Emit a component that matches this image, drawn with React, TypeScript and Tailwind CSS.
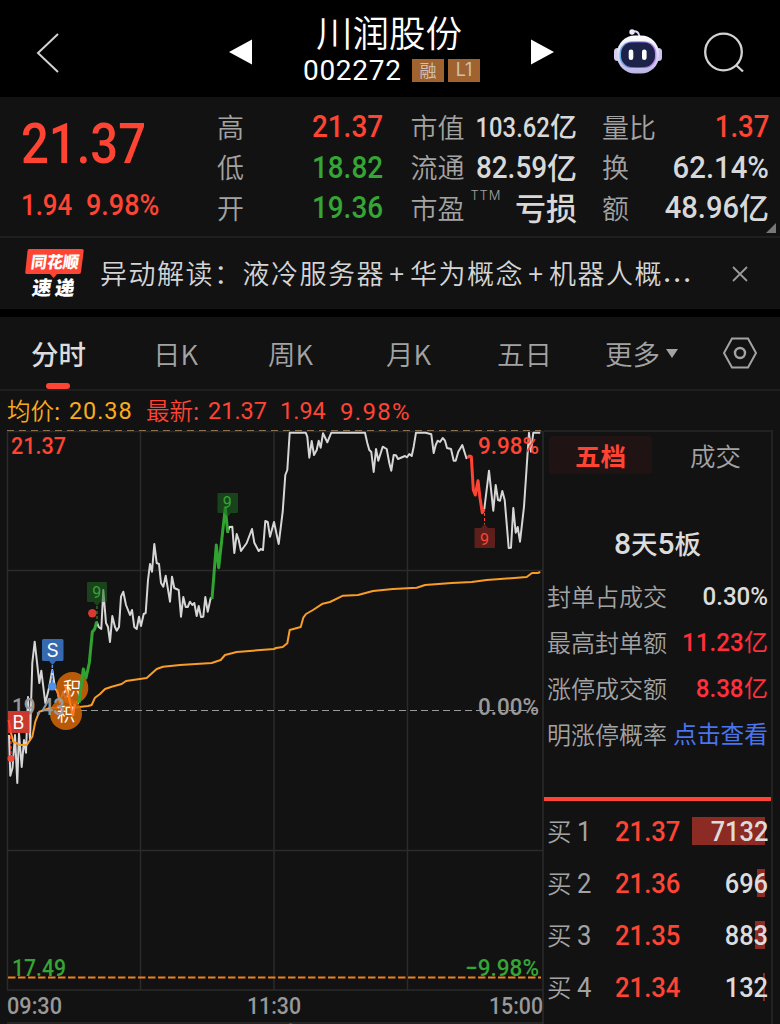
import { ReactNode } from 'react';
import clsx from 'clsx';

type Point = [number, number];

const priceLine: Point[] = [
  [9, 735], [10.3, 775.7], [12.5, 768], [15, 735], [17.3, 783], [19, 733], [21.7, 767], [24, 740], [26, 752.7], [28, 697],
  [30, 740], [32.3, 663], [34.7, 641.7], [39.3, 683], [41.3, 670.7], [45.3, 703], [49, 688], [52.3, 670],
  [55, 688], [57.5, 692], [60, 703], [63, 692], [66, 700], [69, 690], [72, 716], [75, 702], [79, 703],
];

const priceLine2: Point[] = [
  [96.7, 621.7], [98.7, 627], [101.3, 629], [103.3, 590], [106, 623], [108, 627], [110, 642], [112.3, 616],
  [115, 627], [116.7, 630.7], [119, 627], [121, 596.7], [123.3, 591.7], [126, 605], [130, 615], [132, 610],
  [134.3, 627], [136.7, 629], [139, 616.7], [141, 626], [143.7, 614], [145.7, 613], [148, 580], [150, 564],
  [152, 571.7], [154.3, 544], [156.7, 563], [159, 564], [161, 583], [163.3, 586.7], [165.7, 575.7], [170, 601.7],
  [172, 576.7], [174.3, 588], [178.7, 590], [181, 616.7], [183.3, 597], [185.7, 607], [187.7, 607], [190, 601.7],
  [192.3, 605], [194.3, 603], [196.7, 616], [198.7, 606], [201, 617], [203.3, 616.7], [205.3, 597], [207.7, 611.7],
  [210.7, 598], [212, 599],
];

const priceLine3: Point[] = [
  [227.7, 532.7], [229.3, 527], [232.3, 526.7], [234.3, 553], [236.7, 534], [238.7, 540], [241, 551], [246.7, 543],
  [252, 529], [254.3, 542.7], [258.7, 551], [260.7, 549], [263, 550], [265.3, 521], [267.7, 522], [270, 536.7],
  [274, 522], [278.7, 544], [282.7, 511.7], [285.3, 475], [287.3, 470], [289.7, 432.7], [305.7, 432.7],
  [307.3, 436.7], [309.3, 457.7], [311.7, 441], [314, 455], [316.7, 450], [318.7, 440.7], [320.7, 447.7],
  [323, 433.3], [327.3, 442.3], [331.3, 432.7], [365, 432.7], [367.3, 443], [369.3, 450], [371.3, 452],
  [373.7, 472], [376, 449], [378.3, 460.7], [382.7, 446.7], [386.7, 449], [389.3, 463], [391.3, 470.7],
  [393.7, 455], [396, 455.3], [398, 459], [405, 456], [407, 457.3], [409.3, 454], [411.7, 456], [413.7, 446.7],
  [416, 432.7], [425.7, 432.7], [431.3, 434.3], [433.7, 453], [435.7, 445], [437.7, 440.7], [440, 442],
  [442.7, 438], [445, 440.7], [447, 448], [451, 449], [453.7, 460.7], [455.7, 460.7], [458.3, 451.7],
  [462.3, 445], [466.7, 459],
];

const priceLine4: Point[] = [
  [484.3, 509], [489, 470.7], [493.3, 510.7], [495.7, 485], [498, 500], [500, 500.7], [502.3, 491], [504.7, 500],
  [508.7, 548], [511, 547.7], [513.3, 508], [515.7, 532.7], [517.7, 527], [520, 541.7], [524, 506.7],
  [526.7, 466.7], [529, 432.7], [531, 451.7], [533.3, 432.7], [540.3, 432.7],
];

const greenLine: Point[] = [[79, 703], [83.3, 669], [86, 678], [89.3, 663], [92.3, 632], [94.7, 629], [96.7, 621.7]];
const greenLine2: Point[] = [[212, 599], [216.3, 545], [218.7, 567.7], [225.3, 507.7], [227.7, 532.7]];
const redLine: Point[] = [
  [467.7, 457.7], [469.3, 456], [471.3, 456.7], [473.3, 490], [475.3, 495], [478, 480.7], [480, 498], [482.3, 512.7], [484.3, 509],
];

const avgLine: Point[] = [
  [8.7, 720], [11, 733], [13.3, 741.7], [20, 745], [26.7, 745], [32.3, 736.7], [35.3, 721.7], [39.3, 711.7],
  [50, 708], [79.3, 707], [88, 706], [91.7, 705], [95, 697.7], [100, 694], [105, 689], [111.7, 686.7],
  [121.7, 684], [126, 681], [146.7, 678], [156.7, 669], [163, 666.7], [180, 665], [211.7, 663], [220.7, 660],
  [225, 655], [236.7, 652], [274, 649], [276, 648], [282.7, 647], [287.3, 643.3], [289.7, 630], [300.7, 627],
  [303.3, 617.7], [306, 614], [313, 610], [322.7, 603.7], [330, 602], [343, 595.7], [358, 595], [373, 591],
  [393, 589], [416.7, 587.7], [425, 585], [451.7, 583], [471.7, 582], [486.7, 580], [526.7, 577], [532, 573],
  [537.7, 573], [540.3, 572],
];

const toPoints = (line: Point[]) => line.map((p) => p.join(',')).join(' ');

// Digits are set a little narrower than the font's own width
const Num = ({ children, className }: { children: ReactNode; className?: string }) => (
  <span className={clsx('inline-block font-[Roboto] font-medium whitespace-pre', className)}>{children}</span>
);

const Header = () => (
  <header className="relative flex h-[97px] items-center bg-black">
    <svg className="mt-[8px] ml-[34px] shrink-0" width="26" height="44" fill="none" stroke="#d2d2d2" strokeWidth="2">
      <path d="M24 4 L4 23 L24 42" transform="translate(0 -1)" />
    </svg>
    <svg className="mt-[6px] ml-[169px] shrink-0" width="24" height="26" fill="#fff">
      <path d="M0 13 L23 0.500 V25.500 Z" />
    </svg>
    <div className="ml-[50px] flex w-[178px] flex-col">
      <h1 className="mt-[1px] ml-[13px] h-[39px] text-[36.500px] leading-[40px] font-[350]">川润股份</h1>
      <div className="mt-[4px] flex w-full items-center">
        <span className="w-[109px] font-[Roboto] text-[28px] leading-8 tracking-[0.700px]">002272</span>
        <span className="flex h-[23px] w-8 items-center justify-center bg-[#a0622f] pb-[2px] text-[17px] leading-none text-[#cfc0b4]">融</span>
        <span className="ml-1 flex h-[23px] w-8 items-center justify-center bg-[#a0622f] pb-[1px] font-[Inter] text-[18px] leading-none text-[#cfc0b4]">L1</span>
      </div>
    </div>
    <svg className="mt-[6px] ml-[50px] shrink-0" width="24" height="26" fill="#fff">
      <path d="M23 13 L0 0.500 V25.500 Z" />
    </svg>
    <Robot />
    <svg className="mt-[9px] ml-[39px] shrink-0" width="44" height="44" fill="none" stroke="#d2d2d2" strokeWidth="2.300">
      <circle cx="21.500" cy="21" r="18.300" />
      <path d="M34 34 L41 40.500" />
    </svg>
  </header>
);

const Robot = () => (
  <svg className="mt-[5px] ml-[58px] shrink-0" width="50" height="46" viewBox="0 0 50 46">
    <defs>
      <linearGradient id="shell" x1="0" y1="0" x2="0" y2="1">
        <stop offset="0" stopColor="#ffffff" />
        <stop offset="1" stopColor="#b9b5e6" />
      </linearGradient>
      <linearGradient id="rim" x1="0" y1="0" x2="1" y2="0">
        <stop offset="0" stopColor="#6cb4e8" />
        <stop offset="0.500" stopColor="#6c50c8" />
        <stop offset="1" stopColor="#c58cf0" />
      </linearGradient>
    </defs>
    <path d="M19 3.500 Q26 2 26.500 9" fill="none" stroke="#dcd9f5" strokeWidth="2" />
    <circle cx="19" cy="4" r="2.700" fill="#e9e8fa" />
    <rect x="1" y="20" width="7" height="13" rx="3.500" fill="#d3d0ef" />
    <rect x="42" y="20" width="7" height="13" rx="3.500" fill="#c9c4f0" />
    <rect x="4" y="7.500" width="42" height="38" rx="18" fill="url(#shell)" />
    <rect x="6.500" y="13.500" width="37" height="26.500" rx="12" fill="url(#rim)" />
    <rect x="8" y="14.500" width="34" height="24.500" rx="11" fill="#1d2348" />
    <rect x="15.700" y="21.500" width="4.600" height="10.500" rx="2.300" fill="#fff" />
    <rect x="29" y="21.500" width="4.600" height="10.500" rx="2.300" fill="#fff" />
  </svg>
);

const QuoteRow = ({ label, sup, children }: { label: string; sup?: string; children: ReactNode }) => (
  <div className="flex h-[40.500px] items-center justify-between">
    <span className="relative pb-[2px] text-[27px] leading-none font-[350] text-[#a3a3a3]">
      {label}
      {sup && <sup className="absolute -top-[5px] left-[60px] font-[Inter] text-[13px] leading-none font-light tracking-[0.800px]">{sup}</sup>}
    </span>
    <span className="flex items-center">{children}</span>
  </div>
);

const Quote = () => (
  <section className="relative flex h-[141px] border-b-2 border-[#1f1f1f] pt-[10px]">
    <div className="w-[217px] shrink-0 pl-[21px] text-[#ff4433]">
      <div className="mt-[4px] h-[66px]">
        <Num className="origin-left scale-x-[0.875] text-[56px] leading-[66px]">21.37</Num>
      </div>
      <div className="mt-[12px] flex text-[29px] leading-[32px]">
        <Num className="w-[64.500px] origin-left scale-x-[0.89]">1.94</Num>
        <Num className="origin-left scale-x-[0.93]">9.98%</Num>
      </div>
    </div>
    <div className="w-[166px] shrink-0">
      <QuoteRow label="高"><Num className="origin-right scale-x-[0.9] text-[31px] text-[#ff4433]">21.37</Num></QuoteRow>
      <QuoteRow label="低"><Num className="origin-right scale-x-[0.9] text-[31px] text-[#35a535]">18.82</Num></QuoteRow>
      <QuoteRow label="开"><Num className="origin-right scale-x-[0.9] text-[31px] text-[#35a535]">19.36</Num></QuoteRow>
    </div>
    <div className="ml-[27.500px] w-[166.500px] shrink-0 font-medium text-[#d8d8d8]">
      <QuoteRow label="市值">
        <Num className="-ml-4 origin-right scale-x-[0.865] text-[27.500px]">103.62</Num>
        <span className="pb-[3px] text-[27px] leading-none">亿</span>
      </QuoteRow>
      <QuoteRow label="流通">
        <Num className="-ml-4 origin-right scale-x-[0.9] text-[31px]">82.59</Num>
        <span className="pb-[4px] text-[30px] leading-none">亿</span>
      </QuoteRow>
      <QuoteRow label="市盈" sup="TTM">
        <span className="pb-[4px] text-[31px] leading-none">亏损</span>
      </QuoteRow>
    </div>
    <div className="ml-[25px] w-[167px] shrink-0 font-medium text-[#d8d8d8]">
      <QuoteRow label="量比"><Num className="origin-right scale-x-[0.89] text-[31px] text-[#ff4433]">1.37</Num></QuoteRow>
      <QuoteRow label="换"><Num className="origin-right scale-x-[0.945] text-[31px]">62.14%</Num></QuoteRow>
      <QuoteRow label="额">
        <Num className="origin-right scale-x-[0.94] text-[31px]">48.96</Num>
        <span className="pb-[4px] text-[30px] leading-none">亿</span>
      </QuoteRow>
    </div>
    <svg className="absolute right-[4px] bottom-[3px]" width="10" height="10" fill="#777">
      <path d="M10 0 V10 H0 Z" />
    </svg>
  </section>
);

const News = () => (
  <section className="flex h-[71px] items-center">
    <div className="ml-[25px] flex w-[59px] flex-col items-center">
      <svg className="overflow-visible" width="60" height="52" viewBox="0 0 60 52">
        <path d="M4 1 H57 Q59 1 58.700 3 L56 24 Q55.800 26 54 26 H32 L28.500 30 L25 26 H2 Q0 26 0.300 24 L2.500 3 Q2.700 1 4 1 Z" fill="#ff4433" />
        <g fill="#fff" fontFamily="'Noto Sans CJK SC', sans-serif" fontWeight="900" transform="skewX(-8)">
          <text x="8" y="20" fontSize="16.500" textLength="48" lengthAdjust="spacingAndGlyphs">同花顺</text>
          <text x="13" y="47.500" fontSize="19.500" textLength="42.500">速递</text>
        </g>
      </svg>
    </div>
    <p className="ml-[16px] flex w-[620px] pb-[1px] text-[27px] leading-10 font-[350] tracking-[1.500px] whitespace-nowrap text-[#d5d5d5]">
      <span>异动解读：液冷服务器</span>
      <span className="w-[25px] text-center">+</span>
      <span>华为概念</span>
      <span className="w-[25px] text-center">+</span>
      <span>机器人概</span>
      <span className="font-[Inter] font-medium tracking-[1.800px]">...</span>
    </p>
    <svg className="ml-[12px]" width="16" height="16" stroke="#999" strokeWidth="1.800">
      <path d="M1 1 L15 15 M15 1 L1 15" />
    </svg>
  </section>
);

const tabs = [
  { name: '分时', width: 'w-[122px]' },
  { name: '日K', width: 'w-[115px]' },
  { name: '周K', width: 'w-[118px]' },
  { name: '月K', width: 'w-[111px]' },
  { name: '五日', width: 'w-[108px]' },
];

const Tabs = () => (
  <nav className="flex h-[74px] items-center border-b-2 border-[#1f1f1f] pl-[31px] text-[27.500px] font-[350] text-[#a3a3a3]">
    {tabs.map((tab, i) => (
      <div key={tab.name} className={clsx('relative leading-10', tab.width, i === 0 && 'font-medium text-[#dcdcdc]')}>
        {tab.name}
        {i === 0 && <span className="absolute top-[50px] left-[15px] h-[6px] w-6 rounded-full bg-[#ff4433]" />}
      </div>
    ))}
    <div className="flex w-[118px] items-center leading-10">
      更多
      <svg className="ml-[6px]" width="12" height="9" fill="#a3a3a3">
        <path d="M0 0 H12 L6 9 Z" />
      </svg>
    </div>
    <svg width="34" height="32" fill="none" stroke="#a3a3a3" strokeWidth="2">
      <path d="M9 1.500 H25 L33 16 L25 30.500 H9 L1 16 Z" />
      <circle cx="17" cy="16" r="5" strokeWidth="2.400" />
    </svg>
  </nav>
);

const Legend = () => (
  <div className="flex h-[39px] items-center pl-[7px] text-[23.500px] font-[350] text-[#ff4433]">
    <span className="w-[62px] text-[#f9ab1d]">均价:</span>
    <span className="mt-[2px] w-[77px] font-[Roboto] font-normal tracking-[0.900px] text-[#f9ab1d]">20.38</span>
    <span className="w-[62px]">最新:</span>
    <span className="mt-[2px] w-[72px] font-[Roboto] font-normal">21.37</span>
    <span className="mt-[2px] w-[60px] font-[Roboto] font-normal">1.94</span>
    <span className="mt-[2px] font-[Roboto] text-[24px] font-normal tracking-[1.300px]">9.98%</span>
  </div>
);

const Chart = () => (
  <svg className="shrink-0 overflow-visible" width="544" height="594" viewBox="0 430 544 594" fontFamily="Roboto, 'Noto Sans CJK SC', sans-serif" fontSize="24">
    <g stroke="#2b2b2b" strokeWidth="1.500">
      <path d="M7 431.500 H543 M7 570.500 H543 M7 850.500 H543 M7 990 H543 M7 1023 H543" />
      <path d="M7.500 431 V990 M140.500 431 V990 M274 431 V990 M407.500 431 V990 M543 431 V1024" />
    </g>
    <path d="M289 1023.500 H292" stroke="#8c2a24" />
    <path d="M7 430.500 H541" stroke="#8d7350" strokeDasharray="7 5" />
    <path d="M80 710.500 H541" stroke="#999" strokeDasharray="7 4" />
    <path d="M8 977.500 H541" stroke="#ef7f1f" strokeWidth="2" strokeDasharray="7.500 2.500" />

    <g fill="none" strokeLinejoin="round" strokeWidth="2">
      <g stroke="#d6d6d6">
        <polyline points={toPoints(priceLine)} />
        <polyline points={toPoints(priceLine2)} />
        <polyline points={toPoints(priceLine3)} />
        <polyline points={toPoints(priceLine4)} />
      </g>
      <polyline points={toPoints(avgLine)} stroke="#f99d27" />
      <polyline points={toPoints(redLine)} stroke="#ff4433" strokeWidth="3" />
    </g>

    {/* point markers */}
    <g fill="#d06408" fillOpacity="0.880">
      <circle cx="66" cy="714" r="16" />
      <circle cx="72.300" cy="688" r="16" />
    </g>
    <g fill="#fff" fontSize="18" textAnchor="middle">
      <text x="66" y="720.500">积</text>
      <text x="72.300" y="695">积</text>
    </g>
    <path d="M57 690 L60 702 M65 686 L69 698 L73 716 L75 704" stroke="#ff7a1a" strokeWidth="2" fill="none" />
    <text x="12" y="715" fill="#999" fontWeight="500" textLength="53" lengthAdjust="spacingAndGlyphs">19.43</text>
    <g fill="none" strokeLinejoin="round" strokeWidth="3" stroke="#30a330">
      <polyline points={toPoints(greenLine)} />
      <polyline points={toPoints(greenLine2)} />
    </g>

    <path d="M43.500 639 H62 Q63.500 639 63.500 640.500 V659.500 Q63.500 661 62 661 H56 L52.500 665 L49 661 H43.500 Q42 661 42 659.500 V640.500 Q42 639 43.500 639 Z" fill="#3669b0" />
    <path d="M52.300 665 V683" stroke="#4d92e8" strokeWidth="1.500" strokeDasharray="3 2" />
    <circle cx="52.300" cy="686.500" r="4" fill="#4d92e8" />
    <rect x="8" y="711" width="21.500" height="22" fill="#c83a30" />
    <path d="M8.700 720 L11 733" stroke="#ff4433" strokeWidth="2" />
    <path d="M10.800 736 V754" stroke="#ff4433" strokeWidth="1.500" strokeDasharray="3 2" />
    <circle cx="11" cy="758.500" r="3.500" fill="#f04a3c" />
    <g fill="#fff" textAnchor="middle" fontFamily="Inter">
      <text x="52.500" y="657" fontSize="19">S</text>
      <text x="18.300" y="728.500" fontSize="18">B</text>
    </g>

    <g fill="#1f6b22" fillOpacity="0.550">
      <path d="M88 582 H106 Q107 582 107 583 V601 Q107 602 106 602 H100.500 L97 606 L93.500 602 H88 Q87 602 87 601 V583 Q87 582 88 582 Z" />
      <path d="M218.500 493 H237 Q238 493 238 494 V512 Q238 513 237 513 H231 L227.700 517 L224 513 H218.500 Q217.500 513 217.500 512 V494 Q217.500 493 218.500 493 Z" />
    </g>
    <path d="M97 606 V622" stroke="#30a330" strokeDasharray="3 2" />
    <circle cx="92.300" cy="613.300" r="4.200" fill="#d93a2f" />
    <path d="M484.500 513 V525" stroke="#ff4433" strokeDasharray="3 2" />
    <path d="M475.500 528 H481 L484.500 524 L488 528 H494 Q495 528 495 529 V547 Q495 548 494 548 H475.500 Q474.500 548 474.500 547 V529 Q474.500 528 475.500 528 Z" fill="#5c1f1b" />
    <g fontSize="16" textAnchor="middle">
      <text x="96.700" y="598" fill="#35a535">9</text>
      <text x="227.300" y="508" fill="#35a535">9</text>
      <text x="484.500" y="544.500" fill="#ff4433">9</text>
    </g>

    <g fontWeight="500">
      <text x="11" y="454" fill="#ff4433" textLength="55" lengthAdjust="spacingAndGlyphs">21.37</text>
      <text x="478" y="454" fill="#ff4433" textLength="61" lengthAdjust="spacingAndGlyphs">9.98%</text>
      <text x="12" y="976" fill="#35a535" textLength="54" lengthAdjust="spacingAndGlyphs">17.49</text>
      <text x="465" y="976" fill="#35a535" textLength="74" lengthAdjust="spacingAndGlyphs">−9.98%</text>
    </g>
    <g fill="#999" fontWeight="500">
      <text x="478" y="715" textLength="61" lengthAdjust="spacingAndGlyphs">0.00%</text>
      <text x="7" y="1014" textLength="55" lengthAdjust="spacingAndGlyphs">09:30</text>
      <text x="247" y="1014" textLength="54" lengthAdjust="spacingAndGlyphs">11:30</text>
      <text x="489" y="1014" textLength="54" lengthAdjust="spacingAndGlyphs">15:00</text>
    </g>
  </svg>
);

const stats = [
  { label: '封单占成交', value: '0.30%', unit: '', color: 'text-[#dcdcdc]' },
  { label: '最高封单额', value: '11.23', unit: '亿', color: 'text-[#ff2f3c]' },
  { label: '涨停成交额', value: '8.38', unit: '亿', color: 'text-[#ff2f3c]' },
];

const bids = [
  { level: 1, price: '21.37', amount: 7132, bar: 73 },
  { level: 2, price: '21.36', amount: 696, bar: 8 },
  { level: 3, price: '21.35', amount: 883, bar: 10 },
  { level: 4, price: '21.34', amount: 132, bar: 2 },
];

const SidePanel = () => (
  <aside className="h-[594px] w-[229px] shrink-0 border-t-2 border-r-2 border-[#222]">
    <div className="flex pt-[4px] pl-[5px] text-[25.500px] leading-[37px]">
      <div className="h-[38px] w-[103px] rounded bg-[#201314] text-center font-bold text-[#ff4433]">五档</div>
      <div className="flex-1 pl-[8px] text-center font-[350] text-[#a3a3a3]">成交</div>
    </div>
    <div className="mt-[49px] h-10 text-center text-[26.500px] leading-10 font-medium text-[#dcdcdc]">
      <span className="font-[Roboto] text-[30px]">8</span>天<span className="font-[Roboto] text-[30px]">5</span>板
    </div>
    <div className="mt-[10px] px-[3px]">
      {stats.map((stat) => (
        <div key={stat.label} className="flex h-[46px] items-center justify-between text-[24px]">
          <span className="font-[350] text-[#a3a3a3]">{stat.label}</span>
          <span className={clsx('flex items-center', stat.color)}>
            <Num className="origin-right scale-x-[0.91] text-[26.500px]">{stat.value}</Num>
            {stat.unit && <span className="pb-[2px] leading-none">{stat.unit}</span>}
          </span>
        </div>
      ))}
      <div className="flex h-[46px] items-center justify-between text-[24px]">
        <span className="font-[350] text-[#a3a3a3]">明涨停概率</span>
        <a className="text-[23.700px] text-[#4a74ee]">点击查看</a>
      </div>
    </div>
    <div className="mt-[40px] h-1 bg-[#ff4433]" />
    <div className="mt-[4px]">
      {bids.map((bid) => (
        <div key={bid.level} className="relative flex h-[52px] items-center pl-[3px]">
          <span className="w-[30px] text-[24.500px] font-[350] text-[#a3a3a3]">买</span>
          <span className="mt-[2px] w-[38px] origin-left scale-x-[0.95] font-[Roboto] text-[27px] text-[#a3a3a3]">{bid.level}</span>
          <Num className="mt-[2px] origin-left scale-x-[0.95] text-[27px] text-[#ff4433]">{bid.price}</Num>
          <span className="absolute top-3 right-[6px] h-7 bg-[#8c2a24]" style={{ width: bid.bar }} />
          <Num className="absolute top-[7px] right-[3px] origin-right scale-x-[0.94] text-[27px] leading-10 text-[#dcdcdc]">{bid.amount}</Num>
        </div>
      ))}
    </div>
  </aside>
);

const App = () => {
  return (
    <div className="h-[1024px] w-[780px] overflow-hidden bg-[#121212] font-['Noto_Sans_CJK_SC',sans-serif] text-white">
      <Header />
      <Quote />
      <News />
      <div className="h-2 bg-black" />
      <Tabs />
      <Legend />
      <main className="flex">
        <Chart />
        <SidePanel />
      </main>
    </div>
  );
};

export default App;
